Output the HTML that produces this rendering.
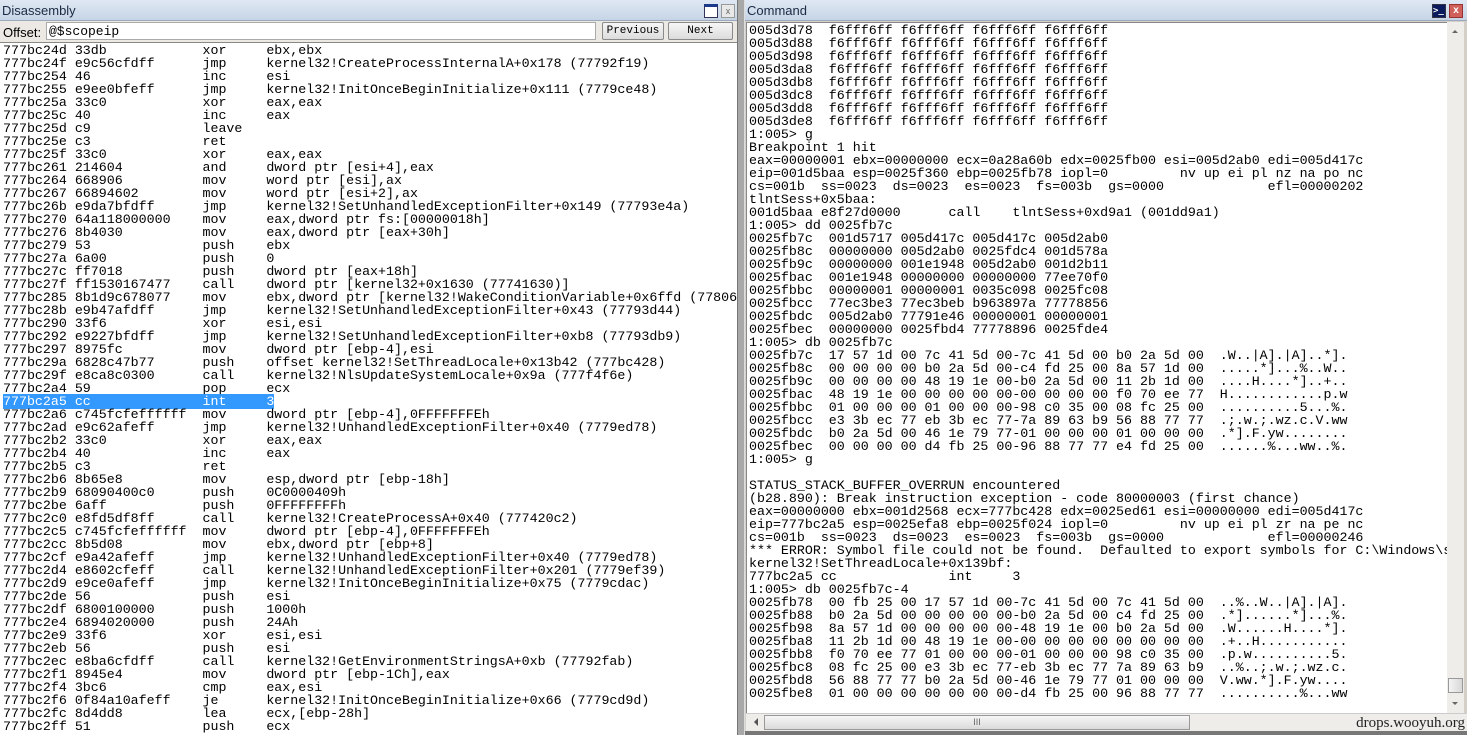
<!DOCTYPE html>
<html><head><meta charset="utf-8"><style>
*{margin:0;padding:0;box-sizing:border-box}
body{width:1467px;height:735px;overflow:hidden;background:#d4d0c8;position:relative;font-family:"Liberation Mono",monospace}
.tb{position:absolute;top:0;height:21px;background:linear-gradient(#dfe8f3,#c6d5e6);font:13px "Liberation Sans",sans-serif;color:#1a2a44;padding:3px 0 0 2px;border-bottom:1px solid #9aa9bb}
pre{font-family:"Liberation Mono",monospace;font-size:13.3px;line-height:13px;white-space:pre;color:#000}
.sel{background:#3399ff;color:#fff}
.btn{position:absolute;top:22px;height:18px;border:1px solid #8a8a8a;border-radius:2px;background:linear-gradient(#f6f6f6,#dcdcdc);font:11px "Liberation Mono",monospace;text-align:center;line-height:16px}
.ico{position:absolute;top:4px;width:14px;height:14px;border:1px solid #335;}
</style></head><body>
<div class="tb" style="left:0;width:738px">Disassembly</div>
<div class="ico" style="left:704px;background:#fff;border-top:3px solid #1c3a8c"></div>
<div class="ico" style="left:721px;background:#e8e8e8;border-color:#999;font:9px sans-serif;color:#666;text-align:center;line-height:12px">x</div>
<div style="position:absolute;left:0;top:21px;width:738px;height:21px;background:#ece9e4"></div>
<div style="position:absolute;left:3px;top:25px;font:13px 'Liberation Sans',sans-serif">Offset:</div>
<div style="position:absolute;left:46px;top:22px;width:550px;height:18px;background:#fff;border:1px solid #aaa;font:13px 'Liberation Mono',monospace;padding:1px 2px">@$scopeip</div>
<div class="btn" style="left:602px;width:62px">Previous</div>
<div class="btn" style="left:668px;width:65px">Next</div>
<div style="position:absolute;left:0;top:42px;width:737px;height:693px;background:#fff;overflow:hidden;border-top:1px solid #888">
<pre style="position:absolute;left:3px;top:1px">777bc24d 33db            xor     ebx,ebx
777bc24f e9c56cfdff      jmp     kernel32!CreateProcessInternalA+0x178 (77792f19)
777bc254 46              inc     esi
777bc255 e9ee0bfeff      jmp     kernel32!InitOnceBeginInitialize+0x111 (7779ce48)
777bc25a 33c0            xor     eax,eax
777bc25c 40              inc     eax
777bc25d c9              leave
777bc25e c3              ret
777bc25f 33c0            xor     eax,eax
777bc261 214604          and     dword ptr [esi+4],eax
777bc264 668906          mov     word ptr [esi],ax
777bc267 66894602        mov     word ptr [esi+2],ax
777bc26b e9da7bfdff      jmp     kernel32!SetUnhandledExceptionFilter+0x149 (77793e4a)
777bc270 64a118000000    mov     eax,dword ptr fs:[00000018h]
777bc276 8b4030          mov     eax,dword ptr [eax+30h]
777bc279 53              push    ebx
777bc27a 6a00            push    0
777bc27c ff7018          push    dword ptr [eax+18h]
777bc27f ff1530167477    call    dword ptr [kernel32+0x1630 (77741630)]
777bc285 8b1d9c678077    mov     ebx,dword ptr [kernel32!WakeConditionVariable+0x6ffd (77806ffd)]
777bc28b e9b47afdff      jmp     kernel32!SetUnhandledExceptionFilter+0x43 (77793d44)
777bc290 33f6            xor     esi,esi
777bc292 e9227bfdff      jmp     kernel32!SetUnhandledExceptionFilter+0xb8 (77793db9)
777bc297 8975fc          mov     dword ptr [ebp-4],esi
777bc29a 6828c47b77      push    offset kernel32!SetThreadLocale+0x13b42 (777bc428)
777bc29f e8ca8c0300      call    kernel32!NlsUpdateSystemLocale+0x9a (777f4f6e)
777bc2a4 59              pop     ecx
<span class="sel">777bc2a5 cc              int     3</span>
777bc2a6 c745fcfeffffff  mov     dword ptr [ebp-4],0FFFFFFFEh
777bc2ad e9c62afeff      jmp     kernel32!UnhandledExceptionFilter+0x40 (7779ed78)
777bc2b2 33c0            xor     eax,eax
777bc2b4 40              inc     eax
777bc2b5 c3              ret
777bc2b6 8b65e8          mov     esp,dword ptr [ebp-18h]
777bc2b9 68090400c0      push    0C0000409h
777bc2be 6aff            push    0FFFFFFFFh
777bc2c0 e8fd5df8ff      call    kernel32!CreateProcessA+0x40 (777420c2)
777bc2c5 c745fcfeffffff  mov     dword ptr [ebp-4],0FFFFFFFEh
777bc2cc 8b5d08          mov     ebx,dword ptr [ebp+8]
777bc2cf e9a42afeff      jmp     kernel32!UnhandledExceptionFilter+0x40 (7779ed78)
777bc2d4 e8602cfeff      call    kernel32!UnhandledExceptionFilter+0x201 (7779ef39)
777bc2d9 e9ce0afeff      jmp     kernel32!InitOnceBeginInitialize+0x75 (7779cdac)
777bc2de 56              push    esi
777bc2df 6800100000      push    1000h
777bc2e4 6894020000      push    24Ah
777bc2e9 33f6            xor     esi,esi
777bc2eb 56              push    esi
777bc2ec e8ba6cfdff      call    kernel32!GetEnvironmentStringsA+0xb (77792fab)
777bc2f1 8945e4          mov     dword ptr [ebp-1Ch],eax
777bc2f4 3bc6            cmp     eax,esi
777bc2f6 0f84a10afeff    je      kernel32!InitOnceBeginInitialize+0x66 (7779cd9d)
777bc2fc 8d4dd8          lea     ecx,[ebp-28h]
777bc2ff 51              push    ecx</pre></div>
<div style="position:absolute;left:737px;top:0;width:8px;height:735px;background:#a8a8a8;border-left:1px solid #777;border-right:1px solid #ddd"></div>
<div class="tb" style="left:745px;width:722px">Command</div>
<div class="ico" style="left:1432px;background:#0a1a5c;border-color:#334;color:#fff;font:bold 9px monospace;line-height:12px">&gt;_</div>
<div class="ico" style="left:1449px;background:#d0605a;border-color:#933;color:#fff;font:bold 10px sans-serif;text-align:center;line-height:12px">x</div>
<div style="position:absolute;left:746px;top:22px;width:701px;height:691px;background:#fff;overflow:hidden;border-left:1px solid #888;border-top:1px solid #888">
<pre style="position:absolute;left:2px;top:1px">005d3d78  f6fff6ff f6fff6ff f6fff6ff f6fff6ff
005d3d88  f6fff6ff f6fff6ff f6fff6ff f6fff6ff
005d3d98  f6fff6ff f6fff6ff f6fff6ff f6fff6ff
005d3da8  f6fff6ff f6fff6ff f6fff6ff f6fff6ff
005d3db8  f6fff6ff f6fff6ff f6fff6ff f6fff6ff
005d3dc8  f6fff6ff f6fff6ff f6fff6ff f6fff6ff
005d3dd8  f6fff6ff f6fff6ff f6fff6ff f6fff6ff
005d3de8  f6fff6ff f6fff6ff f6fff6ff f6fff6ff
1:005> g
Breakpoint 1 hit
eax=00000001 ebx=00000000 ecx=0a28a60b edx=0025fb00 esi=005d2ab0 edi=005d417c
eip=001d5baa esp=0025f360 ebp=0025fb78 iopl=0         nv up ei pl nz na po nc
cs=001b  ss=0023  ds=0023  es=0023  fs=003b  gs=0000             efl=00000202
tlntSess+0x5baa:
001d5baa e8f27d0000      call    tlntSess+0xd9a1 (001dd9a1)
1:005> dd 0025fb7c
0025fb7c  001d5717 005d417c 005d417c 005d2ab0
0025fb8c  00000000 005d2ab0 0025fdc4 001d578a
0025fb9c  00000000 001e1948 005d2ab0 001d2b11
0025fbac  001e1948 00000000 00000000 77ee70f0
0025fbbc  00000001 00000001 0035c098 0025fc08
0025fbcc  77ec3be3 77ec3beb b963897a 77778856
0025fbdc  005d2ab0 77791e46 00000001 00000001
0025fbec  00000000 0025fbd4 77778896 0025fde4
1:005> db 0025fb7c
0025fb7c  17 57 1d 00 7c 41 5d 00-7c 41 5d 00 b0 2a 5d 00  .W..|A].|A]..*].
0025fb8c  00 00 00 00 b0 2a 5d 00-c4 fd 25 00 8a 57 1d 00  .....*]...%..W..
0025fb9c  00 00 00 00 48 19 1e 00-b0 2a 5d 00 11 2b 1d 00  ....H....*]..+..
0025fbac  48 19 1e 00 00 00 00 00-00 00 00 00 f0 70 ee 77  H............p.w
0025fbbc  01 00 00 00 01 00 00 00-98 c0 35 00 08 fc 25 00  ..........5...%.
0025fbcc  e3 3b ec 77 eb 3b ec 77-7a 89 63 b9 56 88 77 77  .;.w.;.wz.c.V.ww
0025fbdc  b0 2a 5d 00 46 1e 79 77-01 00 00 00 01 00 00 00  .*].F.yw........
0025fbec  00 00 00 00 d4 fb 25 00-96 88 77 77 e4 fd 25 00  ......%...ww..%.
1:005> g

STATUS_STACK_BUFFER_OVERRUN encountered
(b28.890): Break instruction exception - code 80000003 (first chance)
eax=00000000 ebx=001d2568 ecx=777bc428 edx=0025ed61 esi=00000000 edi=005d417c
eip=777bc2a5 esp=0025efa8 ebp=0025f024 iopl=0         nv up ei pl zr na pe nc
cs=001b  ss=0023  ds=0023  es=0023  fs=003b  gs=0000             efl=00000246
*** ERROR: Symbol file could not be found.  Defaulted to export symbols for C:\Windows\system32\kernel32.dll -
kernel32!SetThreadLocale+0x139bf:
777bc2a5 cc              int     3
1:005> db 0025fb7c-4
0025fb78  00 fb 25 00 17 57 1d 00-7c 41 5d 00 7c 41 5d 00  ..%..W..|A].|A].
0025fb88  b0 2a 5d 00 00 00 00 00-b0 2a 5d 00 c4 fd 25 00  .*]......*]...%.
0025fb98  8a 57 1d 00 00 00 00 00-48 19 1e 00 b0 2a 5d 00  .W......H....*].
0025fba8  11 2b 1d 00 48 19 1e 00-00 00 00 00 00 00 00 00  .+..H...........
0025fbb8  f0 70 ee 77 01 00 00 00-01 00 00 00 98 c0 35 00  .p.w..........5.
0025fbc8  08 fc 25 00 e3 3b ec 77-eb 3b ec 77 7a 89 63 b9  ..%..;.w.;.wz.c.
0025fbd8  56 88 77 77 b0 2a 5d 00-46 1e 79 77 01 00 00 00  V.ww.*].F.yw....
0025fbe8  01 00 00 00 00 00 00 00-d4 fb 25 00 96 88 77 77  ..........%...ww</pre></div>
<div style="position:absolute;left:1447px;top:22px;width:17px;height:691px;background:#eeedea">
<div style="position:absolute;left:5px;top:8px;border:3px solid transparent;border-bottom:3px solid #666;border-top:0"></div>
<div style="position:absolute;left:1px;top:656px;width:15px;height:15px;background:linear-gradient(90deg,#f4f4f4,#d8d8d8);border:1px solid #999"></div>
<div style="position:absolute;left:5px;top:680px;border:3px solid transparent;border-top:3px solid #666;border-bottom:0"></div>
</div>
<div style="position:absolute;left:746px;top:713px;width:721px;height:18px;background:#eeedea;border-top:1px solid #ccc">
<div style="position:absolute;left:8px;top:4px;border:4px solid transparent;border-right:4px solid #555;border-left:0"></div>
<div style="position:absolute;left:18px;top:1px;width:426px;height:15px;background:linear-gradient(#f6f6f6,#dadada);border:1px solid #999;font:9px sans-serif;text-align:center;color:#666;line-height:13px">III</div>
<div style="position:absolute;right:2px;top:1px;font:15px 'Liberation Serif',serif;color:#222">drops.wooyuh.org</div>
</div>
<div style="position:absolute;left:745px;top:731px;width:722px;height:4px;background:#777"></div>
</body></html>
